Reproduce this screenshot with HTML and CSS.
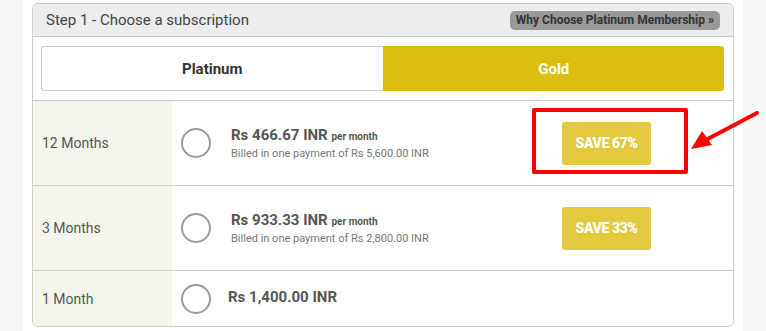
FILE: index.html
```html
<!DOCTYPE html>
<html lang="en">
<head>
    <title>Choose a subscription</title>
    <link rel="stylesheet" href="styles.css">
</head>
<body>
    <div class="page">
        <div class="panel">
            <div class="panel-head">
                <span class="step-title">Step 1 - Choose a subscription</span>
                <a class="why-link" href="#">Why Choose Platinum Membership &raquo;</a>
            </div>

            <div class="tabs-wrap">
                <div class="tabs">
                    <div class="tab">Platinum</div>
                    <div class="tab tab-active">Gold</div>
                </div>
            </div>

            <div class="plan-row">
                <div class="plan-label">12 Months</div>
                <div class="plan-option">
                    <span class="radio"></span>
                    <div class="price-box">
                        <div class="price">Rs 466.67 INR <small>per month</small></div>
                        <div class="billed">Billed in one payment of Rs 5,600.00 INR</div>
                    </div>
                </div>
                <div class="plan-save">
                    <span class="save-badge">SAVE 67%</span>
                    <span class="highlight-box"></span>
                </div>
            </div>

            <div class="plan-row">
                <div class="plan-label">3 Months</div>
                <div class="plan-option">
                    <span class="radio"></span>
                    <div class="price-box">
                        <div class="price">Rs 933.33 INR <small>per month</small></div>
                        <div class="billed">Billed in one payment of Rs 2,800.00 INR</div>
                    </div>
                </div>
                <div class="plan-save">
                    <span class="save-badge">SAVE 33%</span>
                </div>
            </div>

            <div class="plan-row plan-row-last">
                <div class="plan-label">1 Month</div>
                <div class="plan-option">
                    <span class="radio"></span>
                    <div class="price-box price-single">
                        <div class="price">Rs 1,400.00 INR</div>
                    </div>
                </div>
                <div class="plan-save"></div>
            </div>
        </div>
    </div>

    <svg class="arrow" width="80" height="50" viewBox="686 106 80 50">
        <line x1="757" y1="113" x2="702" y2="142" stroke="#ff0000" stroke-width="4" stroke-linecap="round"/>
        <polygon points="691,149 702,131 712,145" fill="#ff0000"/>
    </svg>
</body>
</html>
```

FILE: styles.css
```css
body {
    margin: 0;
    background-color: #f7f7f7;
    font-family: Roboto, "Liberation Sans", Arial, sans-serif;
    color: #555;
}

.page {
    width: 702px;
    margin-left: 23px;
    padding: 3px 9px 4px 9px;
    background-color: #fff;
}

.panel {
    border: 1px solid #ccc;
    border-radius: 6px;
    overflow: hidden;
}

.panel-head {
    display: flex;
    justify-content: space-between;
    align-items: center;
    height: 32px;
    padding: 0 13px 0 13px;
    background-color: #ededed;
    border-bottom: 1px solid #ccc;
}

.step-title {
    font-size: 15px;
    color: #444;
}

.why-link {
    padding: 2px 6px;
    background-color: #999;
    border-radius: 5px;
    color: #333;
    font-size: 12px;
    font-weight: bold;
    text-decoration: none;
    line-height: 15px;
}

.tabs-wrap {
    padding: 9px 9px 9px 8px;
    border-bottom: 1px solid #ccc;
}

.tabs {
    display: flex;
    height: 45px;
}

.tab {
    flex: 1;
    display: flex;
    justify-content: center;
    align-items: center;
    font-size: 15px;
    font-weight: bold;
    color: #333;
    border: 1px solid #ccc;
    border-right: none;
    border-radius: 3px 0 0 3px;
}

.tab-active {
    background-color: #dbbe10;
    border-color: #dbbe10;
    color: #fff;
    border-radius: 0 3px 3px 0;
}

.plan-row {
    display: flex;
    height: 84px;
    border-bottom: 1px solid #ccc;
}

.plan-row-last {
    height: 55px;
    border-bottom: none;
}

.plan-label {
    width: 130px;
    padding-left: 9px;
    display: flex;
    align-items: center;
    background-color: #f6f5ed;
    font-size: 14px;
    color: #555;
}

.plan-option {
    flex: 1;
    display: flex;
    align-items: center;
    padding-left: 9px;
}

.radio {
    width: 26px;
    height: 26px;
    border: 2px solid #9a9a9a;
    border-radius: 50%;
    margin-right: 20px;
}

.price-box {
    padding-top: 1px;
}

.price-single {
    margin-left: -3px;
    padding-top: 0;
    margin-top: -4px;
}

.price {
    font-size: 15px;
    font-weight: bold;
    color: #555;
    line-height: 18px;
}

.price small {
    font-size: 10px;
}

.billed {
    font-size: 11px;
    color: #777;
    line-height: 16px;
}

.plan-save {
    position: relative;
    width: 171px;
    display: flex;
    align-items: center;
}

.save-badge {
    display: flex;
    justify-content: center;
    align-items: center;
    width: 89px;
    height: 43px;
    background-color: #e2c93d;
    border-radius: 3px;
    color: #fff;
    font-size: 14px;
    font-weight: 900;
    letter-spacing: -0.4px;
}

.highlight-box {
    position: absolute;
    left: -30px;
    top: 7px;
    width: 148px;
    height: 58px;
    border: 4px solid #ff0000;
    border-radius: 2px;
}

.arrow {
    position: absolute;
    left: 686px;
    top: 106px;
}
```
